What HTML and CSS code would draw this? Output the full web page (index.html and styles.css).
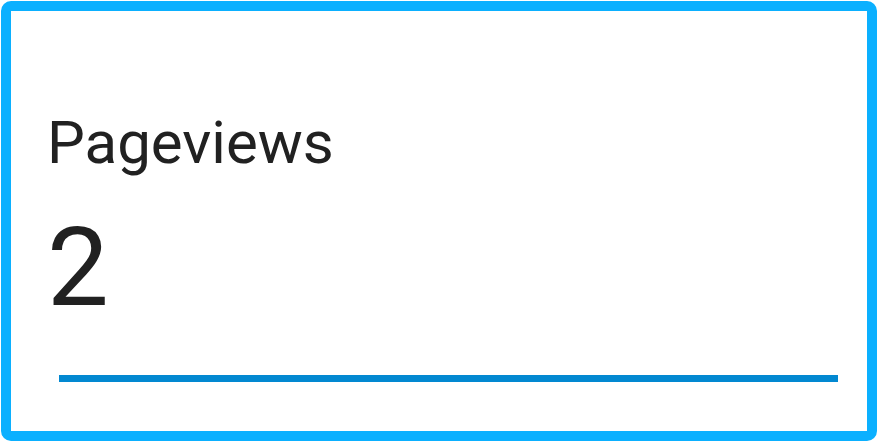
FILE: index.html
```html
<!DOCTYPE html>
<html lang="en">
<head>
  <meta charset="UTF-8" />
  <title>Pageviews</title>
  <link rel="stylesheet" href="styles.css">
</head>
<body>
  <div class="card">
    <div class="label">Pageviews</div>
    <div class="value">2</div>
    <div class="bar"></div>
  </div>
</body>
</html>
```

FILE: styles.css
```css
body {
  margin: 0;
  padding: 1px;
  font-family: Roboto, Arial, sans-serif;
  background: #fff;
}
.card {
  box-sizing: border-box;
  width: 876px;
  height: 440px;
  border: 10px solid #0bb0ff;
  border-radius: 10px;
  padding: 98px 29px 0 36px;
  color: #212121;
}
.label {
  font-size: 60px;
  line-height: 68px;
}
.value {
  font-size: 110px;
  line-height: 112px;
  margin-top: 35px;
}
.bar {
  height: 7px;
  background: #0288d1;
  margin: 51px 0 0 12px;
}
```
